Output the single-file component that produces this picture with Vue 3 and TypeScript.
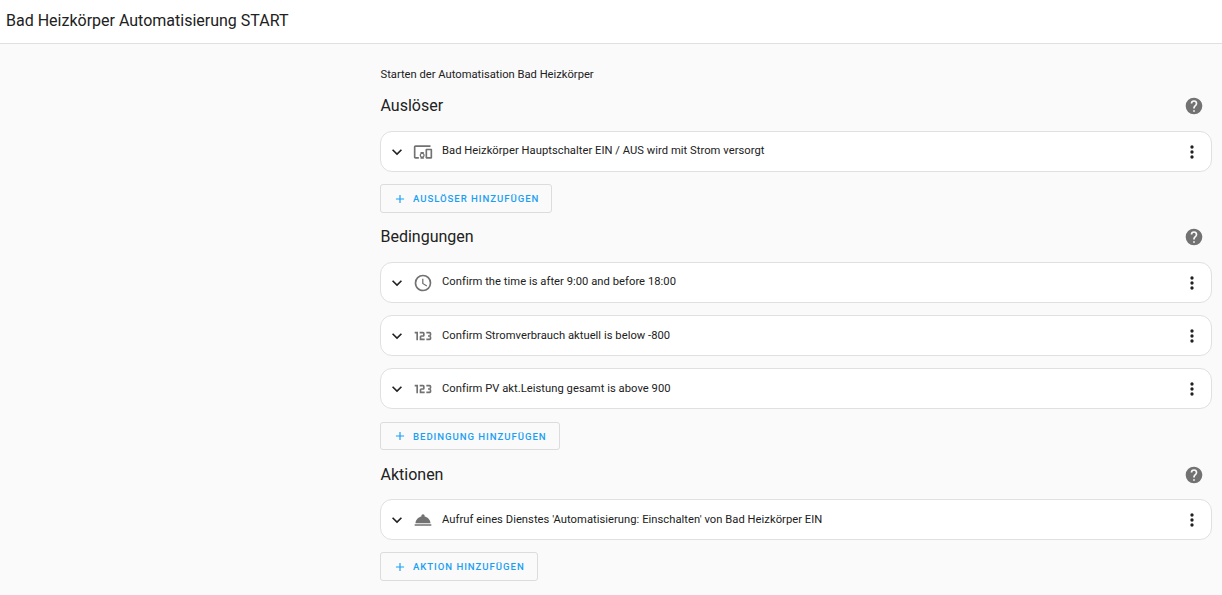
<script setup lang="ts">
const P = {
  devices: 'M3 6H21V4H3C1.9 4 1 4.9 1 6V18C1 19.1 1.9 20 3 20H7V18H3V6M13 12H9V13.78C8.39 14.33 8 15.11 8 16C8 16.89 8.39 17.67 9 18.22V20H13V18.22C13.61 17.67 14 16.88 14 16S13.61 14.33 13 13.78V12M11 17.5C10.17 17.5 9.5 16.83 9.5 16S10.17 14.5 11 14.5 12.5 15.17 12.5 16 11.83 17.5 11 17.5M22 8H16C15.5 8 15 8.5 15 9V19C15 19.5 15.5 20 16 20H22C22.5 20 23 19.5 23 19V9C23 8.5 22.5 8 22 8M21 18H17V10H21V18Z',
  clock: 'M12,20A8,8 0 0,0 20,12A8,8 0 0,0 12,4A8,8 0 0,0 4,12A8,8 0 0,0 12,20M12,2A10,10 0 0,1 22,12A10,10 0 0,1 12,22C6.47,22 2,17.5 2,12A10,10 0 0,1 12,2M12.5,7V12.25L17,14.92L16.25,16.15L11,13V7H12.5Z',
  numeric: 'M4,17V9H2V7H6V17H4M22,15C22,16.11 21.1,17 20,17H16V15H20V13H18V11H20V9H16V7H20A2,2 0 0,1 22,9V10.5A1.5,1.5 0 0,1 20.5,12A1.5,1.5 0 0,1 22,13.5V15M14,15V17H8V13C8,11.89 8.9,11 10,11H12V9H8V7H12A2,2 0 0,1 14,9V11C14,12.11 13.1,13 12,13H10V15H14Z',
  service: 'M12,5A2,2 0 0,1 14,7C14,7.24 13.96,7.47 13.88,7.69C17.95,8.5 21,11.91 21,16H3C3,11.91 6.05,8.5 10.12,7.69C10.04,7.47 10,7.24 10,7A2,2 0 0,1 12,5M22,19H2V17H22V19Z',
}
const help = 'M15.07,11.25L14.17,12.17C13.45,12.89 13,13.5 13,15H11V14.5C11,13.39 11.45,12.39 12.17,11.67L13.41,10.41C13.78,10.05 14,9.55 14,9C14,7.89 13.1,7 12,7A2,2 0 0,0 10,9H8A4,4 0 0,1 12,5A4,4 0 0,1 16,9C16,9.88 15.64,10.67 15.07,11.25M13,19H11V17H13M12,2A10,10 0 0,0 2,12A10,10 0 0,0 12,22A10,10 0 0,0 22,12C22,6.47 17.5,2 12,2Z'
const dots = 'M12,16A2,2 0 0,1 14,18A2,2 0 0,1 12,20A2,2 0 0,1 10,18A2,2 0 0,1 12,16M12,10A2,2 0 0,1 14,12A2,2 0 0,1 12,14A2,2 0 0,1 10,12A2,2 0 0,1 12,10M12,4A2,2 0 0,1 14,6A2,2 0 0,1 12,8A2,2 0 0,1 10,6A2,2 0 0,1 12,4Z'
const chevron = 'M7.41,8.58L12,13.17L16.59,8.58L18,10L12,16L6,10L7.41,8.58Z'
const plus = 'M19,13H13V19H11V13H5V11H11V5H13V11H19V13Z'

const sections = [
  { title: 'Auslöser', add: 'Auslöser hinzufügen', cls: 's1', rows: [
    { icon: P.devices, text: 'Bad Heizkörper Hauptschalter EIN / AUS wird mit Strom versorgt' },
  ] },
  { title: 'Bedingungen', add: 'Bedingung hinzufügen', cls: 's2', rows: [
    { icon: P.clock, text: 'Confirm the time is after 9:00 and before 18:00' },
    { icon: P.numeric, text: 'Confirm Stromverbrauch aktuell is below -800' },
    { icon: P.numeric, text: 'Confirm PV akt.Leistung gesamt is above 900' },
  ] },
  { title: 'Aktionen', add: 'Aktion hinzufügen', cls: 's3', rows: [
    { icon: P.service, text: "Aufruf eines Dienstes 'Automatisierung: Einschalten' von Bad Heizkörper EIN" },
  ] },
]
</script>

<template>
  <div class="page">
    <header class="top">Bad Heizkörper Automatisierung START</header>
    <main class="content">
      <p class="desc">Starten der Automatisation Bad Heizkörper</p>
      <section v-for="s in sections" :key="s.title" class="section" :class="s.cls">
        <div class="head">
          <h2>{{ s.title }}</h2>
          <svg class="help" viewBox="0 0 24 24"><path :d="help" /></svg>
        </div>
        <div class="rows">
          <div v-for="r in s.rows" :key="r.text" class="card">
            <svg class="chev" viewBox="0 0 24 24"><path :d="chevron" /></svg>
            <svg class="ico" viewBox="0 0 24 24"><path :d="r.icon" /></svg>
            <span class="label">{{ r.text }}</span>
            <svg class="more" viewBox="0 0 24 24"><path :d="dots" /></svg>
          </div>
        </div>
        <button class="add" type="button">
          <svg viewBox="0 0 24 24"><path :d="plus" /></svg>
          <span>{{ s.add }}</span>
        </button>
      </section>
    </main>
  </div>
</template>

<style>
html, body { margin: 0; background: #fafafa; }
</style>

<style scoped>
.page {
  width: 1222px;
  height: 595px;
  overflow: hidden;
  background: #fafafa;
  font-family: Roboto, "Liberation Sans", sans-serif;
  color: #212121;
}
.top {
  box-sizing: border-box;
  height: 44px;
  padding: 0 6px 3px;
  display: flex;
  align-items: center;
  background: #fff;
  border-bottom: 1px solid #e0e0e0;
  font-size: 16px;
}
.content {
  box-sizing: border-box;
  width: 832px;
  margin-left: 380px;
}
.desc {
  margin: 0;
  padding: 24px 0 0 0.5px;
  height: 50px;
  box-sizing: border-box;
  font-size: 11.2px;
  line-height: 14px;
}
.head {
  display: flex;
  align-items: center;
  justify-content: space-between;
  height: 24px;
  padding: 0 8px 0 0.5px;
}
.head h2 {
  margin: 0;
  font-size: 16px;
  font-weight: 400;
  line-height: 24px;
}
.help { width: 20px; height: 20px; fill: #727272; }
.rows {
  display: flex;
  flex-direction: column;
  gap: 12px;
  margin-top: 13px;
}
.card {
  box-sizing: border-box;
  height: 41px;
  display: flex;
  align-items: center;
  background: #fff;
  border: 1px solid #e0e0e0;
  border-radius: 12px;
}
.chev { width: 20px; height: 20px; margin-left: 6px; fill: #212121; flex: none; }
.ico { width: 20px; height: 20px; margin-left: 6px; fill: #727272; flex: none; }
.label { margin-left: 9px; font-size: 11.2px; font-weight: 400; letter-spacing: 0.04px; flex: 1; color: #212121; }
.s1 .label, .s2 .card:first-child .label { margin-bottom: 2px; }
.more { width: 20px; height: 20px; margin-right: 9px; fill: #212121; flex: none; }
.add {
  box-sizing: border-box;
  display: flex;
  align-items: center;
  height: 29px;
  margin-top: 12px;
  padding: 0 12px;
  background: transparent;
  border: 1px solid #dcdcdc;
  border-radius: 3px;
  color: #1a9ff3;
  font-family: inherit;
  font-size: 9.6px;
  font-weight: 500;
  letter-spacing: 0.95px;
  text-transform: uppercase;
}
.add svg { width: 14px; height: 14px; fill: #1a9ff3; margin-right: 6px; }
.s2 { margin-top: 12px; }
.s2 .add { margin-top: 13px; height: 28px; }
.s3 { margin-top: 13px; }
.s3 .rows { margin-top: 12px; }
</style>
